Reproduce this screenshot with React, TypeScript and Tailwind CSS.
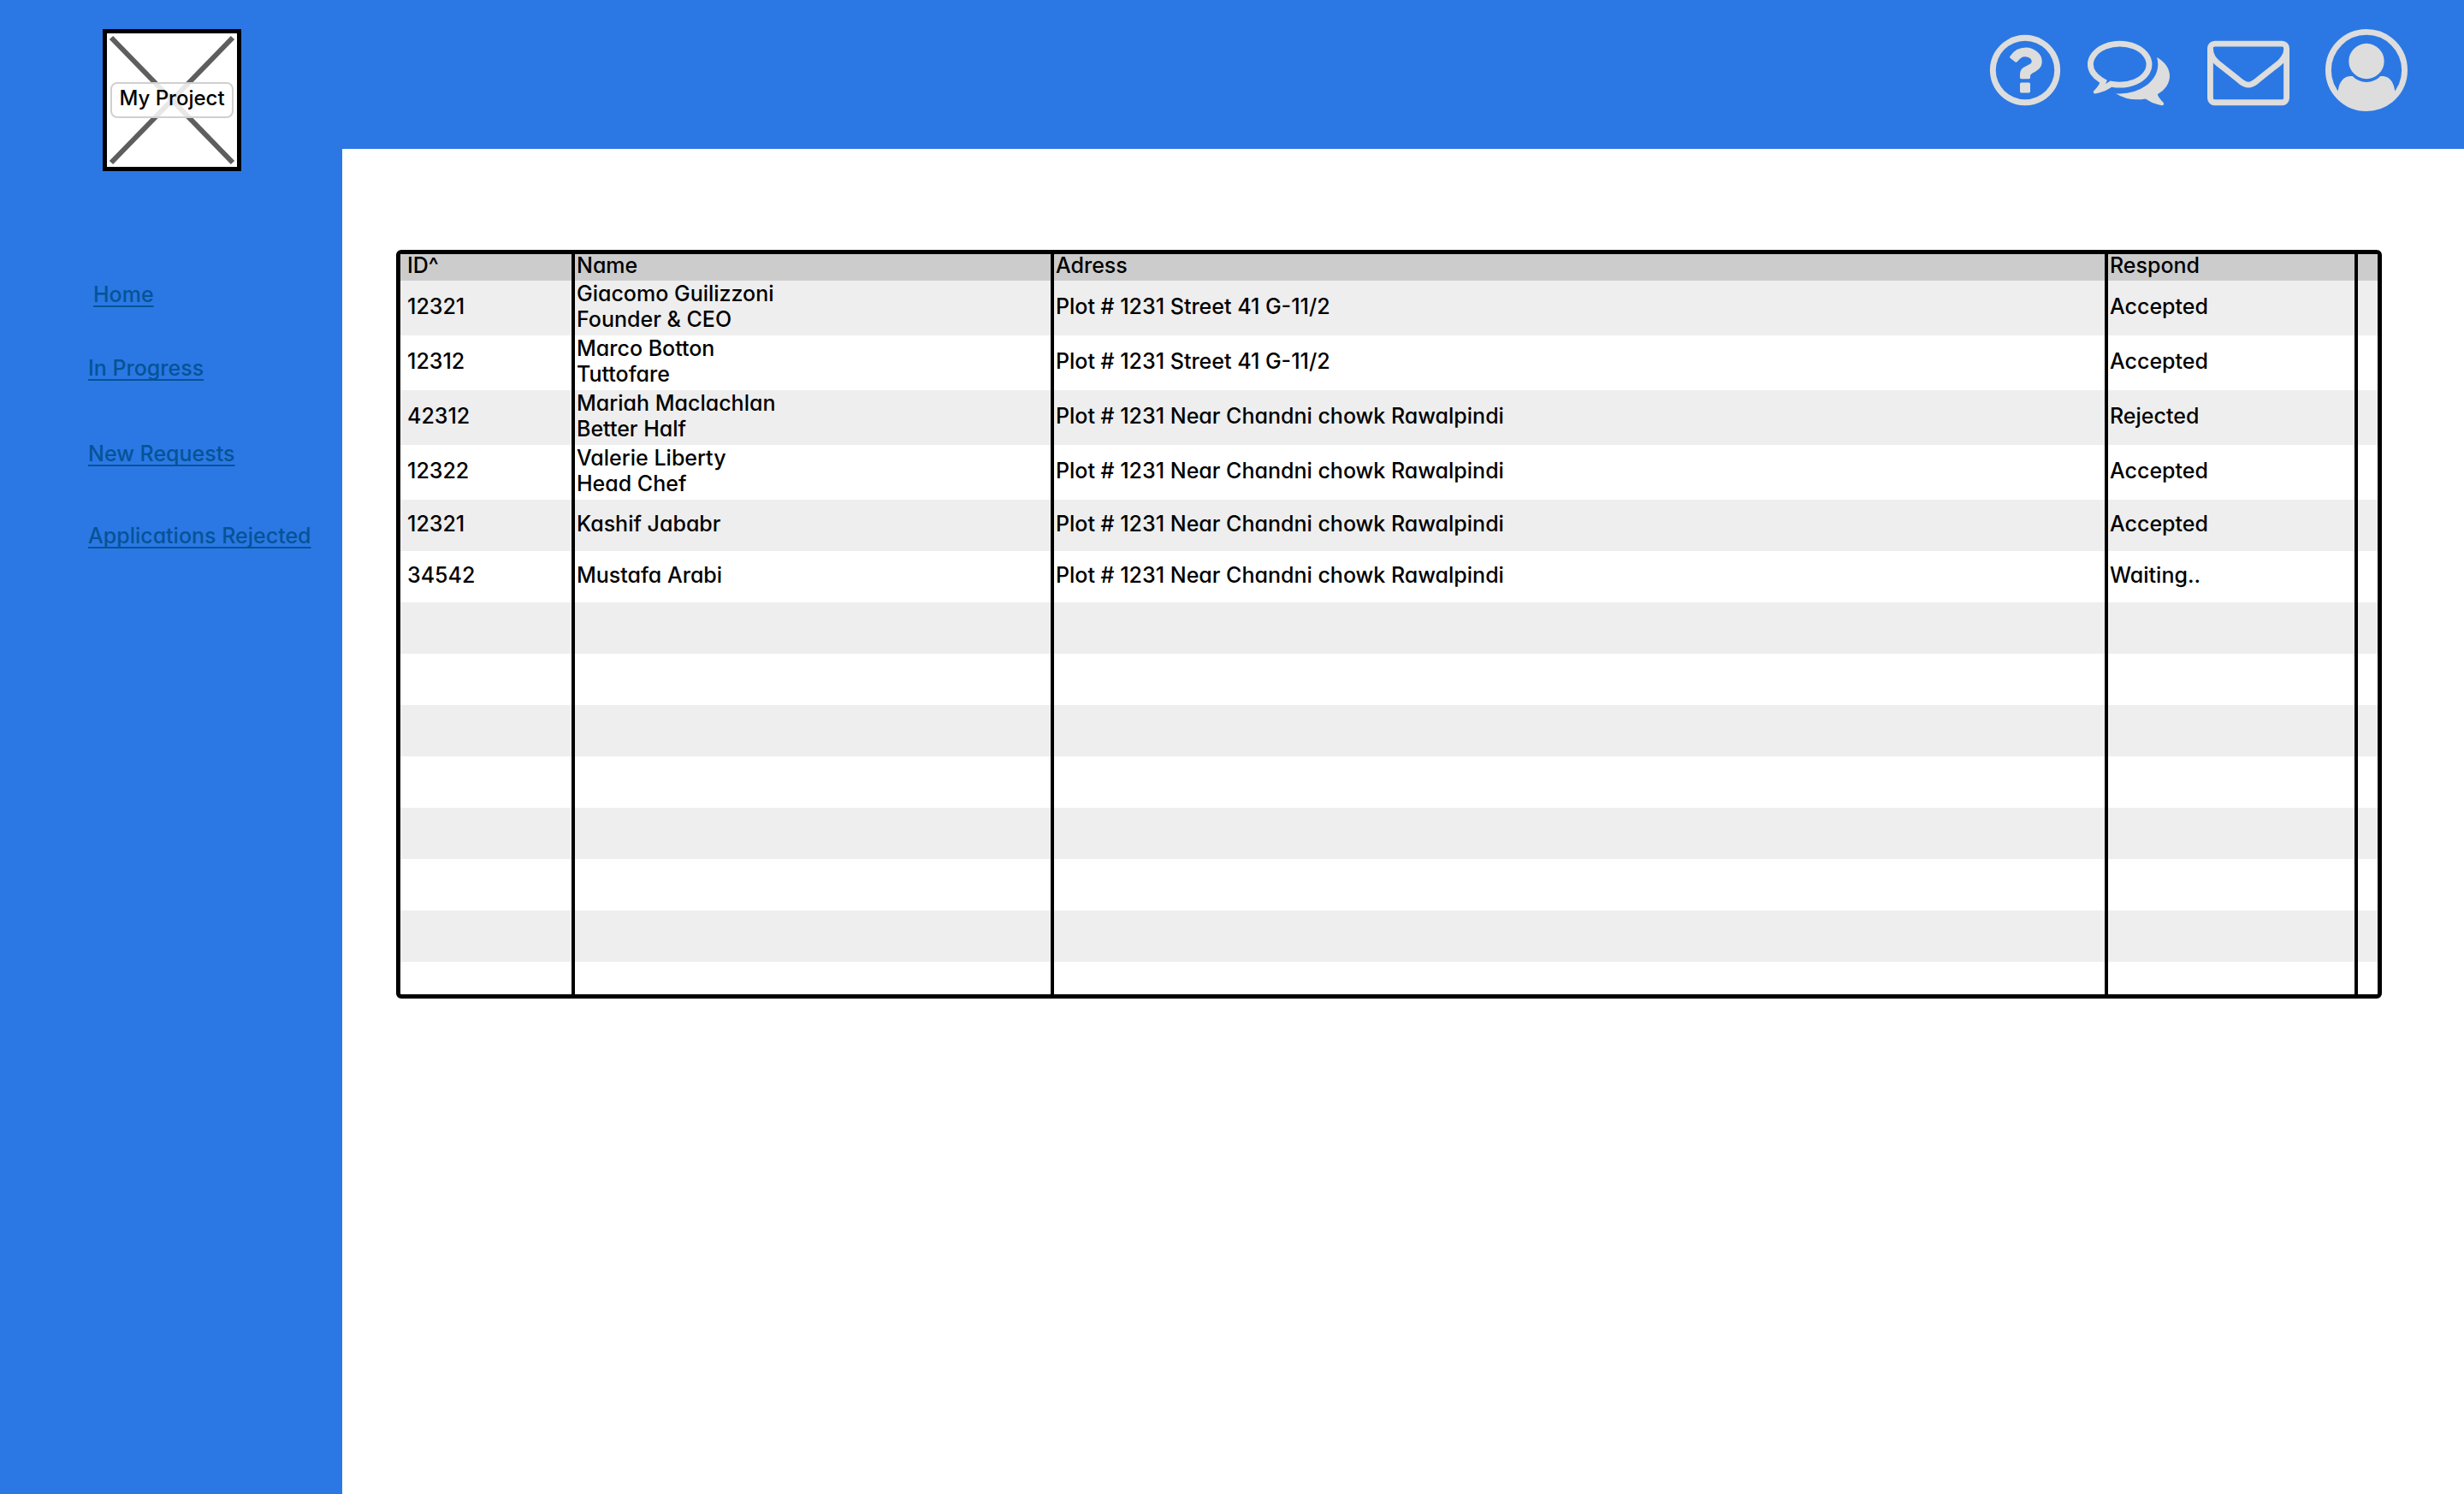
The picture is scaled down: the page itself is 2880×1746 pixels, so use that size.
import type { ReactNode } from "react";

type Row = { id: string; name: string[]; address: string; respond: string };

const STREET = "Plot # 1231 Street 41 G-11/2";
const CHOWK = "Plot # 1231 Near Chandni chowk Rawalpindi";

const rows: Row[] = [
  { id: "12321", name: ["Giacomo Guilizzoni", "Founder & CEO"], address: STREET, respond: "Accepted" },
  { id: "12312", name: ["Marco Botton", "Tuttofare"], address: STREET, respond: "Accepted" },
  { id: "42312", name: ["Mariah Maclachlan", "Better Half"], address: CHOWK, respond: "Rejected" },
  { id: "12322", name: ["Valerie Liberty", "Head Chef"], address: CHOWK, respond: "Accepted" },
  { id: "12321", name: ["Kashif Jababr"], address: CHOWK, respond: "Accepted" },
  { id: "34542", name: ["Mustafa Arabi"], address: CHOWK, respond: "Waiting.." },
];

const emptyRowHeights = ["h-[60px]", "h-[60px]", "h-[60px]", "h-[60px]", "h-[60px]", "h-[60px]", "h-[60px]", "h-[38px]"];

const links = [
  { label: "Home", className: "ml-1.5" },
  { label: "In Progress", className: "mt-[54px]" },
  { label: "New Requests", className: "mt-[68px]" },
  { label: "Applications Rejected", className: "mt-16" },
];

function IconButton({ label, className = "", children }: { label: string; className?: string; children: ReactNode }) {
  return (
    <button type="button" aria-label={label} className={`size-24 shrink-0 text-[#dddddd] ${className}`}>
      <svg viewBox="0 0 1792 1792" fill="currentColor" className="size-full" aria-hidden="true">
        {children}
      </svg>
    </button>
  );
}

function Logo() {
  return (
    <div className="relative ml-[120px] flex h-[166px] w-[162px] items-center justify-center border-[5px] border-black bg-white">
      <svg viewBox="0 0 152 156" className="absolute inset-0 size-full" aria-hidden="true">
        <path d="M5 5L147 151M147 5L5 151" stroke="#5e5e5e" strokeWidth="6" />
      </svg>
      <span className="relative flex h-[42px] w-36 items-center justify-center rounded-lg border-2 border-[#d0d0d0] bg-white/85 pb-1 text-2xl whitespace-nowrap">
        My Project
      </span>
    </div>
  );
}

function Sidebar() {
  return (
    <aside className="w-[400px] shrink-0 pt-[34px]">
      <Logo />
      <nav className="mt-32 ml-[103px] flex flex-col items-start leading-8 text-[#055397]">
        {links.map((l) => (
          <a
            key={l.label}
            href="#"
            className={`whitespace-nowrap underline decoration-2 underline-offset-4 [text-decoration-skip-ink:none] ${l.className}`}
          >
            {l.label}
          </a>
        ))}
      </nav>
    </aside>
  );
}

function TopBar() {
  return (
    <header className="flex h-[174px] items-start justify-end pt-[34px] pr-[66px]">
      <IconButton label="Help" className="mr-[25px]">
        <path d="M1008 1200v160q0 14-9 23t-23 9h-160q-14 0-23-9t-9-23v-160q0-14 9-23t23-9h160q14 0 23 9t9 23zm256-496q0 50-15 90t-45.500 69-52 44-59.500 36q-32 18-46.500 28t-26 24-11.500 29v32q0 14-9 23t-23 9h-160q-14 0-23-9t-9-23v-68q0-35 10.500-64.500t24-47.500 39-35.500 41-25.500 44.500-21q53-25 75-43t22-49q0-42-43.500-71.500t-95.500-29.500q-56 0-95 27-29 20-80 83-9 12-25 12-11 0-19-6l-108-82q-10-7-12-20t5-23q122-192 349-192 129 0 238.500 89.500t109.500 214.500zm-368-448q-130 0-248.500 51t-204 136.500-136.500 204-51 248.500 51 248.500 136.500 204 204 136.500 248.500 51 248.500-51 204-136.500 136.500-204 51-248.500-51-248.500-136.500-204-204-136.500-248.500-51zm768 640q0 209-103 385.500t-279.500 279.500-385.500 103-385.500-103-279.500-279.500-103-385.500 103-385.500 279.500-279.500 385.500-103 385.500 103 279.500 279.500 103 385.500z" />
      </IconButton>
      <IconButton label="Chat" className="mr-11">
        <path d="M704 384q-153 0-286 52t-211.500 141-78.500 191q0 82 53 158t149 132l97 56-35 84q34-20 62-39l44-31 53 10q78 14 153 14 153 0 286-52t211.500-141 78.500-191-78.500-191-211.500-141-286-52zm0-128q191 0 353.500 68.500t256.500 186.500 94 257-94 257-256.500 186.500-353.500 68.500q-86 0-176-16-124 88-278 128-36 9-86 16h-3q-11 0-20.500-8t-11.500-21q-1-3-1-6.500t.5-6.500 2-6l2.500-5 3.500-5.500 4-5 4.500-5 4-4.500q5-6 23-25t26-29.500 22.500-29 25-38.500 20.500-44q-124-72-195-177t-71-224q0-139 94-257t256.500-186.500 353.500-68.500zm822 1169q10 24 20.500 44t25 38.500 22.500 29 26 29.500 23 25q1 1 4 4.500t4.500 5 4 5 3.500 5.500l2.500 5 2 6 .5 6.500-1 6.500q-3 14-13 22t-22 7q-50-7-86-16-154-40-278-128-90 16-176 16-271 0-472-132 58 4 88 4 161 0 309-45t264-129q125-92 192-212t67-254q0-77-23-152 129 71 204 178t75 230q0 120-71 224.500t-195 176.500z" />
      </IconButton>
      <IconButton label="Mail" className="mr-[42px]">
        <path d="M1664 1504v-768q-32 36-69 66-268 206-426 338-51 43-83 67t-86.500 48.500-102.500 24.500h-2q-48 0-102.500-24.500t-86.500-48.500-83-67q-158-132-426-338-37-30-69-66v768q0 13 9.500 22.500t22.500 9.500h1472q13 0 22.500-9.500t9.500-22.500zm0-1051v-24.500l-.5-13-3-12.500-5.500-9-9-7.500-14-2.500h-1472q-13 0-22.500 9.500t-9.500 22.500q0 168 147 284 193 152 401 317 6 5 35 29.500t46 37.500 44.500 31.500 50.500 27.500 43 9h2q20 0 43-9t50.500-27.500 44.500-31.500 46-37.500 35-29.500q208-165 401-317 54-43 100.500-115.500t46.500-131.500zm128-37v1088q0 66-47 113t-113 47h-1472q-66 0-113-47t-47-113v-1088q0-66 47-113t113-47h1472q66 0 113 47t47 113z" />
      </IconButton>
      <IconButton label="Account">
        <circle cx="896" cy="896" r="832" fill="none" stroke="currentColor" strokeWidth="128" />
        <circle cx="896" cy="700" r="386" />
        <path d="M276 1350C300 1150 400 1010 592 1028C670 1110 775 1156 896 1156S1122 1110 1200 1028C1392 1010 1492 1150 1516 1350L1560 1420A840 840 0 0 1 232 1420Z" />
      </IconButton>
    </header>
  );
}

const divider = "border-r-4 border-black";

function RequestsTable() {
  return (
    <div className="rounded-md border-[5px] border-black">
      <table className="w-full table-fixed border-separate border-spacing-0 text-left">
        <colgroup>
          <col className="w-[204px]" />
          <col className="w-[560px]" />
          <col />
          <col className="w-[292px]" />
          <col className="w-[23px]" />
        </colgroup>
        <thead>
          <tr className="h-[31px] bg-[#cccccc] align-top leading-[26px]">
            <th scope="col" className={`p-0 pl-2 font-[450] ${divider}`}>ID^</th>
            <th scope="col" className={`p-0 pl-0.5 font-[450] ${divider}`}>Name</th>
            <th scope="col" className={`p-0 pl-0.5 font-[450] ${divider}`}>Adress</th>
            <th scope="col" className={`p-0 pl-0.5 font-[450] ${divider}`}>Respond</th>
            <td className="p-0" />
          </tr>
        </thead>
        <tbody className="leading-[30px]">
          {rows.map((r, i) => (
            <tr key={i} className={`odd:bg-[#eeeeee] ${r.name.length > 1 ? "h-16" : "h-[60px]"}`}>
              <td className={`p-0 pb-1 pl-2 ${divider}`}>{r.id}</td>
              <td className={`p-0 pb-1 pl-0.5 ${divider}`}>
                {r.name.map((line) => (
                  <div key={line}>{line}</div>
                ))}
              </td>
              <td className={`p-0 pb-1 pl-0.5 ${divider}`}>{r.address}</td>
              <td className={`p-0 pb-1 pl-0.5 ${divider}`}>{r.respond}</td>
              <td className="p-0" />
            </tr>
          ))}
          {emptyRowHeights.map((h, i) => (
            <tr key={`empty-${i}`} className={`odd:bg-[#eeeeee] ${h}`}>
              <td className={`p-0 ${divider}`} />
              <td className={`p-0 ${divider}`} />
              <td className={`p-0 ${divider}`} />
              <td className={`p-0 ${divider}`} />
              <td className="p-0" />
            </tr>
          ))}
        </tbody>
      </table>
    </div>
  );
}

export default function App() {
  return (
    <div className="flex min-h-screen bg-[#2b78e4] font-['Inter',sans-serif] text-[25px] font-[450] text-black [font-feature-settings:'cv11']">
      <Sidebar />
      <div className="flex min-w-0 flex-1 flex-col">
        <TopBar />
        <main className="flex-1 bg-white pt-[118px] pr-24 pl-[63px]">
          <RequestsTable />
        </main>
      </div>
    </div>
  );
}
